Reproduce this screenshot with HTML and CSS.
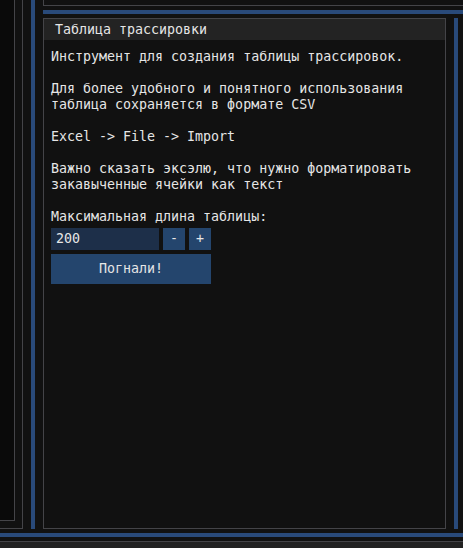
FILE: index.html
```html
<!DOCTYPE html>
<html lang="ru">
<head>
<meta charset="utf-8">
<title>Таблица трассировки</title>
<link rel="stylesheet" href="styles.css">
</head>
<body>
<div class="app">
  <div class="workspace">
    <div class="left-dock">
      <div class="left-inner"></div>
    </div>
    <div class="gap-v"></div>
    <div class="vsplit"></div>
    <div class="gap-v"></div>
    <div class="right-area">
      <div class="top-box"></div>
      <div class="gap-h"></div>
      <div class="hsplit"></div>
      <div class="gap-h"></div>
      <div class="right-row">
        <div class="panel">
          <div class="panel-title">Таблица трассировки</div>
          <div class="panel-body">
            <p class="line">Инструмент для создания таблицы трассировок.</p>
            <p class="line">&nbsp;</p>
            <p class="line">Для более удобного и понятного использования</p>
            <p class="line">таблица сохраняется в формате CSV</p>
            <p class="line">&nbsp;</p>
            <p class="line">Excel -&gt; File -&gt; Import</p>
            <p class="line">&nbsp;</p>
            <p class="line">Важно сказать эксэлю, что нужно форматировать</p>
            <p class="line">закавыченные ячейки как текст</p>
            <p class="line">&nbsp;</p>
            <p class="line">Максимальная длина таблицы:</p>
            <div class="input-row">
              <div class="input">200</div>
              <div class="step-btn">-</div>
              <div class="step-btn">+</div>
            </div>
            <div class="go-btn">Погнали!</div>
          </div>
        </div>
        <div class="gap-v"></div>
        <div class="vsplit short"></div>
      </div>
    </div>
  </div>
  <div class="gap-h"></div>
  <div class="hsplit"></div>
  <div class="gap-h"></div>
  <div class="status"></div>
</div>
</body>
</html>
```

FILE: styles.css
```css
* { box-sizing: border-box; }
html, body { margin: 0; padding: 0; }
body {
  background: #111111;
  font-family: "DejaVu Sans Mono", monospace;
  font-size: 13.3px;
  color: #e6e6e6;
  width: 463px;
  height: 548px;
  overflow: hidden;
}
.app {
  width: 463px;
  height: 548px;
  display: flex;
  flex-direction: column;
  background: #111111;
}
.workspace {
  height: 529px;
  display: flex;
  flex-direction: row;
  flex: none;
}
.left-dock {
  width: 23px;
  height: 529px;
  border-right: 1px solid #444448;
  border-bottom: 1px solid #444448;
  background: #111111;
  flex: none;
}
.left-inner {
  width: 15px;
  height: 521px;
  background: #0a0a0a;
  border-right: 1px solid #444448;
  border-bottom: 1px solid #444448;
}
.gap-v { width: 8px; flex: none; }
.gap-h { height: 4px; flex: none; }
.vsplit { width: 4px; background: #294a7a; flex: none; }
.hsplit { height: 4px; background: #294a7a; flex: none; }
.right-area {
  flex: 1;
  display: flex;
  flex-direction: column;
}
.top-box {
  height: 6px;
  border-left: 1px solid #444448;
  border-bottom: 1px solid #444448;
  flex: none;
}
.right-row {
  flex: 1;
  display: flex;
  flex-direction: row;
}
.panel {
  width: 403px;
  height: 511px;
  border: 1px solid #444448;
  background: #111111;
  flex: none;
  display: flex;
  flex-direction: column;
}
.panel-title {
  height: 21px;
  background: #232323;
  padding-left: 11px;
  line-height: 21px;
  color: #e6e6e6;
  white-space: pre;
  flex: none;
}
.panel-body {
  padding: 9px 0 0 7px;
}
.line {
  margin: 0;
  height: 16px;
  line-height: 16px;
  white-space: pre;
}
.input-row {
  display: flex;
  gap: 4px;
  margin-top: 3px;
  height: 22px;
}
.input {
  width: 108px;
  height: 22px;
  background: #1d2f49;
  padding-left: 5px;
  line-height: 22px;
}
.step-btn {
  width: 22px;
  height: 22px;
  background: #24456d;
  text-align: center;
  line-height: 22px;
}
.go-btn {
  margin-top: 4px;
  width: 160px;
  height: 30px;
  background: #24456d;
  text-align: center;
  line-height: 30px;
}
.status {
  flex: 1;
  border-top: 1px solid #444448;
  background: #222222;
}
```
